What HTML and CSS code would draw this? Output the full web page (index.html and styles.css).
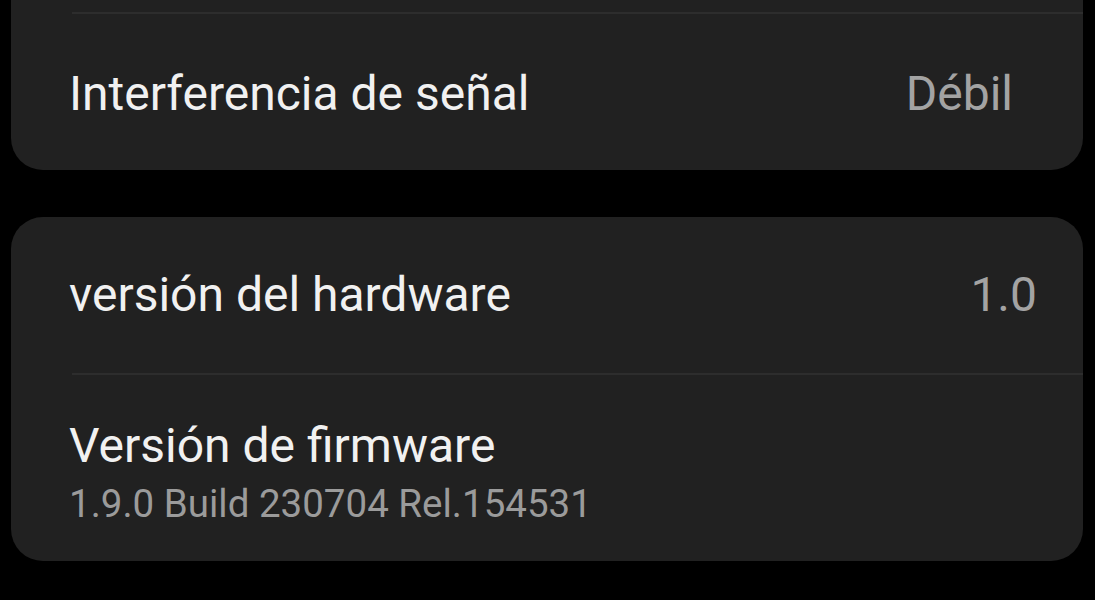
FILE: index.html
```html
<!DOCTYPE html>
<html lang="es">
<head>
<meta charset="utf-8">
<title>Ajustes</title>
<link rel="stylesheet" href="styles.css">
</head>
<body>
<main class="screen">
  <section class="card card-cut">
    <div class="row-cut"></div>
    <div class="divider"></div>
    <div class="row row-first">
      <span class="label">Interferencia de señal</span>
      <span class="value value-signal">Débil</span>
    </div>
  </section>
  <section class="card">
    <div class="row">
      <span class="label">versión del hardware</span>
      <span class="value value-hw">1.0</span>
    </div>
    <div class="divider"></div>
    <div class="row row-tall">
      <div class="stack">
        <span class="label">Versión de firmware</span>
        <span class="sub">1.9.0 Build 230704 Rel.154531</span>
      </div>
    </div>
  </section>
</main>
</body>
</html>
```
FILE: styles.css
```css
html, body {
  margin: 0;
  padding: 0;
  background: #000;
}
body {
  font-family: Roboto, "Noto Sans", "Liberation Sans", sans-serif;
  width: 1095px;
  height: 600px;
  overflow: hidden;
}
.screen {
  display: flex;
  flex-direction: column;
  gap: 47px;
  padding: 0 12px 0 11px;
}
.card {
  background: #212121;
  border-radius: 32px;
  display: flex;
  flex-direction: column;
}
.card-cut {
  border-radius: 0 0 32px 32px;
}
.row-cut {
  height: 12px;
}
.divider {
  height: 2px;
  background: #2d2d2d;
  margin-left: 61px;
}
.row {
  box-sizing: border-box;
  display: flex;
  align-items: center;
  justify-content: space-between;
  height: 156px;
  padding-left: 58px;
}
.row-first {
  padding-top: 4px;
}
.row-tall {
  height: 186px;
  padding-top: 8px;
}
.label {
  color: #f1f1f1;
  font-size: 48px;
  line-height: 56px;
}
.value {
  color: #a3a3a3;
  font-size: 48px;
  line-height: 56px;
}
.value-signal {
  padding-right: 70px;
}
.value-hw {
  padding-right: 46px;
}
.stack {
  display: flex;
  flex-direction: column;
  gap: 7px;
}
.sub {
  color: #9b9b9b;
  font-size: 38.5px;
  line-height: 46px;
}
```
